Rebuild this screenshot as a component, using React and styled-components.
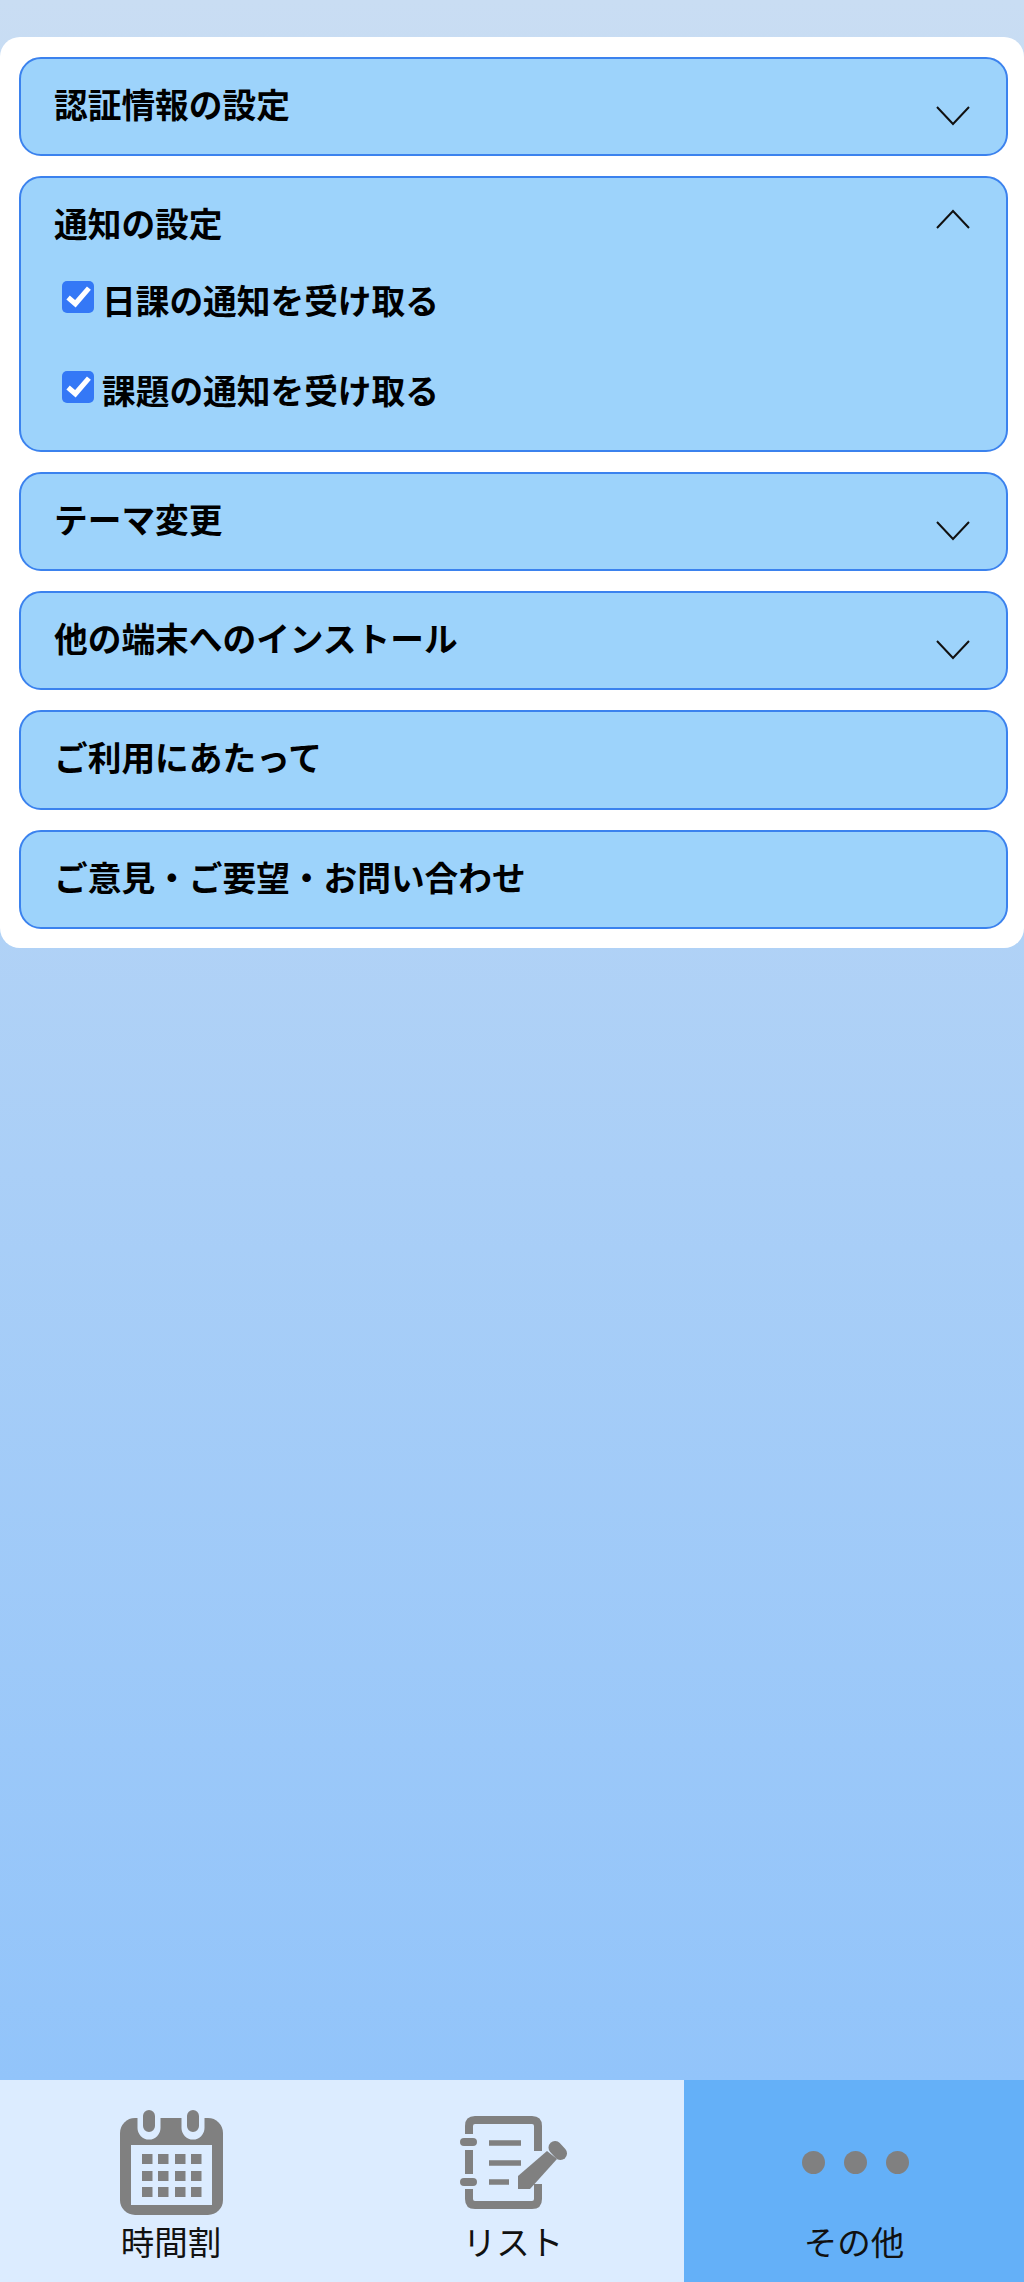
import styled, { createGlobalStyle } from 'styled-components'

const GlobalStyle = createGlobalStyle`
  html, body {
    margin: 0;
    padding: 0;
  }
  body {
    font-family: "Noto Sans CJK JP", "Noto Sans", sans-serif;
    color: #000;
  }
`

const Page = styled.div`
  display: flex;
  flex-direction: column;
  height: 2282px;
`

const Main = styled.main`
  flex: 1;
  padding-top: 37px;
  background: linear-gradient(#c9ddf3, #92c4fa);
`

const Panel = styled.section`
  display: flex;
  flex-direction: column;
  gap: 20px;
  padding: 19.5px 16px 19.5px 19px;
  background: #fff;
  border-radius: 20px;
`

const Item = styled.div`
  box-sizing: border-box;
  min-height: 99.3px;
  padding: 20px 36px 0 33px;
  background: #9dd3fb;
  border: 2px solid #3b82ee;
  border-radius: 22px;
`

const Header = styled.div`
  display: flex;
  justify-content: space-between;
  align-items: flex-start;
`

const Title = styled.h2`
  margin: 0;
  font-size: 33.7px;
  font-weight: 700;
  line-height: 50px;
`

const Chevron = styled.svg`
  display: block;
  width: 34px;
  height: 20px;
  margin-top: ${p => (p.$open ? '11px' : '27px')};
  fill: none;
  stroke: #111;
  stroke-width: 2;
`

const Options = styled.div`
  display: flex;
  flex-direction: column;
  gap: 40px;
  padding: 27px 0 35px 8px;
`

const Option = styled.label`
  display: flex;
  align-items: flex-start;
  gap: 8px;
  font-size: 33.7px;
  font-weight: 700;
  line-height: 50px;
`

const Box = styled.span`
  flex: none;
  display: flex;
  align-items: center;
  justify-content: center;
  width: 32px;
  height: 32px;
  margin-top: 6px;
  background: #3478f6;
  border-radius: 5px;
`

const Check = styled.svg`
  width: 25px;
  height: 23px;
  fill: none;
  stroke: #fff;
  stroke-width: 5;
`

const Nav = styled.nav`
  display: grid;
  grid-template-columns: 342px 342px 340px;
  height: 202px;
  background: #dcecff;
`

const Tab = styled.div`
  display: flex;
  flex-direction: column;
  align-items: center;
  background: ${p => (p.$active ? '#64b0f8' : 'transparent')};
`

const IconSlot = styled.div`
  display: flex;
  align-items: center;
  justify-content: center;
  height: 105px;
  margin-top: 30px;
`

const TabLabel = styled.span`
  margin-top: 1px;
  font-size: 33.5px;
  line-height: 50px;
  color: #111;
`

const Dots = styled.div`
  display: flex;
  gap: 19px;
  margin-left: 2px;
`

const Dot = styled.span`
  width: 23px;
  height: 23px;
  background: #808080;
  border-radius: 50%;
`

const ChevronIcon = ({ open }) => (
  <Chevron $open={open} viewBox="0 0 34 20">
    <path d={open ? 'M1 19 L17 2 L33 19' : 'M1 1 L17 18 L33 1'} />
  </Chevron>
)

const CheckOption = ({ children }) => (
  <Option>
    <Box>
      <Check viewBox="0 0 24 22">
        <path d="M2 12 L9 18 L22 3" />
      </Check>
    </Box>
    {children}
  </Option>
)

const CalendarIcon = () => {
  const xs = [22, 38, 55, 71]
  const ys = [44, 61, 77]
  return (
    <svg width="103" height="105" viewBox="0 0 103 105">
      <rect y="8" width="103" height="97" rx="15" fill="#808080" />
      <path d="M29 0 V18 M73 0 V18" stroke="#dcecff" strokeWidth="23" strokeLinecap="round" />
      <path d="M29 6 V16 M73 6 V16" stroke="#808080" strokeWidth="12" strokeLinecap="round" />
      <rect x="11" y="35" width="81" height="60" fill="#dcecff" />
      {ys.map(y =>
        xs.map(x => <rect key={`${x}-${y}`} x={x} y={y} width="10.5" height="10" fill="#808080" />)
      )}
    </svg>
  )
}

const ListIcon = () => (
  <svg width="107" height="93" viewBox="0 0 107 93" fill="none" stroke="#808080">
    <path
      d="M9 18 V10 Q9 4 15 4 H72 Q78 4 78 10 V35 M9 34 V58 M78 68 V83 Q78 89 72 89 H15 Q9 89 9 83 V73"
      strokeWidth="8"
    />
    <path d="M4 26 H13 M4 66 H13" strokeWidth="8" strokeLinecap="round" />
    <path d="M29 27 H61 M29 47 H61 M29 66 H49" strokeWidth="5.5" />
    <path d="M58 73 V60 L87 35 L97 43 L70 73 Z" fill="#808080" stroke="none" />
    <path d="M95 31.5 L100.5 37.5" strokeWidth="13" strokeLinecap="round" />
  </svg>
)

const App = () => {
  return (
    <Page>
      <GlobalStyle />
      <Main>
        <Panel>
          <Item>
            <Header>
              <Title>認証情報の設定</Title>
              <ChevronIcon />
            </Header>
          </Item>
          <Item>
            <Header>
              <Title>通知の設定</Title>
              <ChevronIcon open />
            </Header>
            <Options>
              <CheckOption>日課の通知を受け取る</CheckOption>
              <CheckOption>課題の通知を受け取る</CheckOption>
            </Options>
          </Item>
          <Item>
            <Header>
              <Title>テーマ変更</Title>
              <ChevronIcon />
            </Header>
          </Item>
          <Item>
            <Header>
              <Title>他の端末へのインストール</Title>
              <ChevronIcon />
            </Header>
          </Item>
          <Item>
            <Header>
              <Title>ご利用にあたって</Title>
            </Header>
          </Item>
          <Item>
            <Header>
              <Title>ご意見・ご要望・お問い合わせ</Title>
            </Header>
          </Item>
        </Panel>
      </Main>
      <Nav>
        <Tab>
          <IconSlot>
            <CalendarIcon />
          </IconSlot>
          <TabLabel>時間割</TabLabel>
        </Tab>
        <Tab>
          <IconSlot>
            <ListIcon />
          </IconSlot>
          <TabLabel>リスト</TabLabel>
        </Tab>
        <Tab $active>
          <IconSlot>
            <Dots>
              <Dot />
              <Dot />
              <Dot />
            </Dots>
          </IconSlot>
          <TabLabel>その他</TabLabel>
        </Tab>
      </Nav>
    </Page>
  )
}

export default App
